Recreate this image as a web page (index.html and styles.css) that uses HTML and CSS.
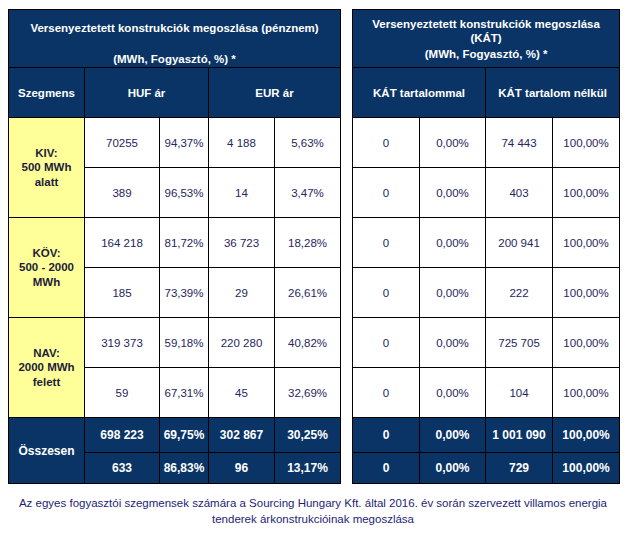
FILE: index.html
```html
<!DOCTYPE html>
<html lang="hu">
<head>
<meta charset="utf-8">
<title>Versenyeztetett konstrukciók megoszlása</title>
<link rel="stylesheet" href="styles.css">
</head>
<body>
<div class="page">
  <div class="tables">
    <table class="grid left">
      <colgroup>
        <col class="c-seg"><col class="c-a"><col class="c-b"><col class="c-c"><col class="c-d">
      </colgroup>
      <tr class="r-title">
        <th colspan="5" class="title">
          <div class="t1">Versenyeztetett konstrukciók megoszlása (pénznem)</div>
          <div class="t2">(MWh, Fogyasztó, %) *</div>
        </th>
      </tr>
      <tr class="r-head">
        <th>Szegmens</th>
        <th colspan="2">HUF ár</th>
        <th colspan="2">EUR ár</th>
      </tr>
      <tr class="r-data">
        <td rowspan="2" class="seg">KIV:<br>500 MWh<br>alatt</td>
        <td>70255</td><td>94,37%</td><td>4 188</td><td>5,63%</td>
      </tr>
      <tr class="r-data">
        <td>389</td><td>96,53%</td><td>14</td><td>3,47%</td>
      </tr>
      <tr class="r-data">
        <td rowspan="2" class="seg">KÖV:<br>500 - 2000<br>MWh</td>
        <td>164 218</td><td>81,72%</td><td>36 723</td><td>18,28%</td>
      </tr>
      <tr class="r-data">
        <td>185</td><td>73,39%</td><td>29</td><td>26,61%</td>
      </tr>
      <tr class="r-data">
        <td rowspan="2" class="seg">NAV:<br>2000 MWh<br>felett</td>
        <td>319 373</td><td>59,18%</td><td>220 280</td><td>40,82%</td>
      </tr>
      <tr class="r-data">
        <td>59</td><td>67,31%</td><td>45</td><td>32,69%</td>
      </tr>
      <tr class="r-tot1 tot">
        <td rowspan="2" class="tot-label">Összesen</td>
        <td>698 223</td><td>69,75%</td><td>302 867</td><td>30,25%</td>
      </tr>
      <tr class="r-tot2 tot">
        <td>633</td><td>86,83%</td><td>96</td><td>13,17%</td>
      </tr>
    </table>

    <table class="grid right">
      <colgroup>
        <col class="k-a"><col class="k-b"><col class="k-c"><col class="k-d">
      </colgroup>
      <tr class="r-title">
        <th colspan="4" class="title title-r">
          <div class="u1">Versenyeztetett konstrukciók megoszlása</div>
          <div class="u2">(KÁT)</div>
          <div class="u3">(MWh, Fogyasztó, %) *</div>
        </th>
      </tr>
      <tr class="r-head">
        <th colspan="2">KÁT tartalommal</th>
        <th colspan="2">KÁT tartalom nélkül</th>
      </tr>
      <tr class="r-data"><td>0</td><td>0,00%</td><td>74 443</td><td>100,00%</td></tr>
      <tr class="r-data"><td>0</td><td>0,00%</td><td>403</td><td>100,00%</td></tr>
      <tr class="r-data"><td>0</td><td>0,00%</td><td>200 941</td><td>100,00%</td></tr>
      <tr class="r-data"><td>0</td><td>0,00%</td><td>222</td><td>100,00%</td></tr>
      <tr class="r-data"><td>0</td><td>0,00%</td><td>725 705</td><td>100,00%</td></tr>
      <tr class="r-data"><td>0</td><td>0,00%</td><td>104</td><td>100,00%</td></tr>
      <tr class="r-tot1 tot"><td>0</td><td>0,00%</td><td>1 001 090</td><td>100,00%</td></tr>
      <tr class="r-tot2 tot"><td>0</td><td>0,00%</td><td>729</td><td>100,00%</td></tr>
    </table>
  </div>
  <p class="caption">Az egyes fogyasztói szegmensek számára a Sourcing Hungary Kft. által 2016. év során szervezett villamos energia<br>tenderek árkonstrukcióinak megoszlása</p>
</div>
</body>
</html>
```

FILE: styles.css
```css
html, body {
  margin: 0;
  padding: 0;
  background: #ffffff;
}

.page {
  padding: 9px 0 0 8px;
  width: 610px;
  font-family: "Liberation Sans", Arial, sans-serif;
}

.tables {
  display: flex;
  gap: 11px;
  align-items: flex-start;
}

.grid {
  border-collapse: collapse;
  table-layout: fixed;
  border: 1px solid #000;
}

.grid.left { width: 332px; }
.grid.right { width: 267px; }

.c-seg { width: 76px; }
.c-a { width: 75px; }
.c-b { width: 49px; }
.c-c { width: 66px; }
.c-d { width: 66px; }

.k-a { width: 67px; }
.k-b { width: 66px; }
.k-c { width: 67px; }
.k-d { width: 67px; }

.grid th,
.grid td {
  border: 1px solid #000;
  padding: 0;
  text-align: center;
  vertical-align: middle;
}

.grid th {
  background: #0a3466;
  color: #ffffff;
  font-weight: bold;
  font-size: 11.5px;
}

.r-title { height: 58px; }
.r-head { height: 50px; }
.r-data { height: 50px; }
.r-tot1 { height: 35px; }
.r-tot2 { height: 31px; }

.title {
  vertical-align: top;
}

.t1 {
  line-height: 16px;
  margin-top: 10px;
}

.t2 {
  line-height: 16px;
  margin-top: 15px;
}

.u1 {
  line-height: 14px;
  margin-top: 2px;
}

.u2 {
  line-height: 14px;
}

.u3 {
  line-height: 16px;
  margin-top: 1px;
}

.grid td {
  font-size: 11.5px;
  color: #26265e;
  background: #ffffff;
}

.grid td.seg {
  background: #ffff99;
  font-weight: bold;
  color: #1c1c3a;
  line-height: 14.5px;
  font-size: 11.5px;
}

.grid tr.tot td {
  background: #0a3466;
  color: #ffffff;
  font-weight: bold;
  font-size: 12px;
}

.grid tr.tot td.tot-label {
  font-size: 12px;
}

.caption {
  margin: 11px 0 0 0;
  text-align: center;
  font-size: 11.5px;
  line-height: 16px;
  color: #1e1e78;
}
```
